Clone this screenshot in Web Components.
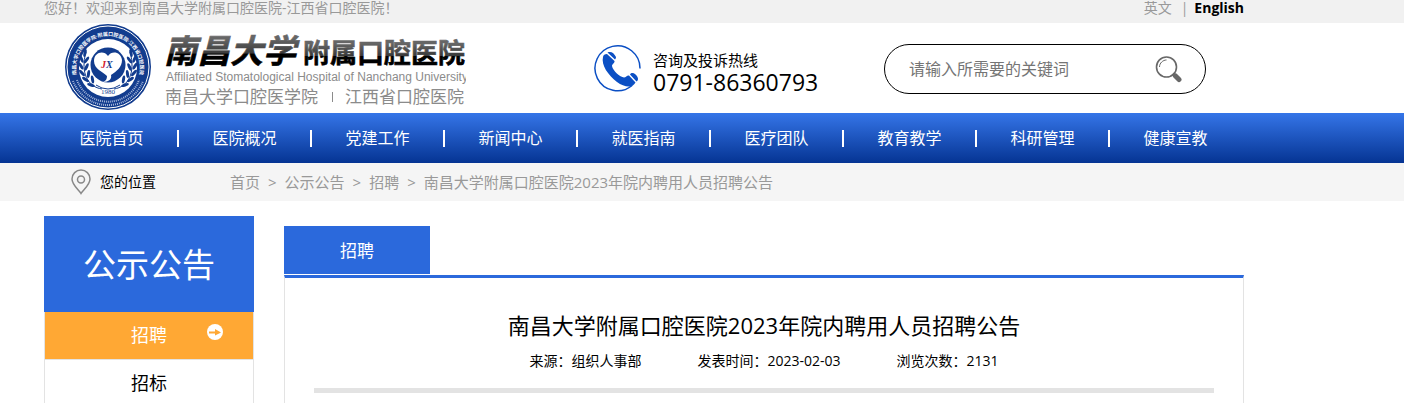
<!DOCTYPE html>
<html lang="zh-CN">
<head>
  <meta charset="utf-8">
  <meta name="viewport" content="width=device-width, initial-scale=1.0">
  <title>南昌大学附属口腔医院</title>
  <style>
    * { box-sizing: border-box; }
    body {
      margin: 0;
      background: #fff;
      color: #000;
      font: 14px/20px "Open Sans", "Noto Sans CJK SC", sans-serif;
      --blue: #2b69dc;
      --line: #e3e3e3;
    }
    .columns {
      display: flex;
      align-items: flex-start;
      gap: 30px;
      padding-top: 15px;
    }
    article-panel { flex: 1; margin-top: 10px; }
  </style>
</head>
<body>
  <template id="page-wrap">
    <style>
      :host { display: block; box-sizing: border-box; max-width: 1244px; padding-left: 44px; }
    </style>
    <slot></slot>
  </template>

  <template id="top-bar">
    <style>
      :host { display: block; background: #f1f1f1; color: #999; }
      .row { display: flex; justify-content: space-between; line-height: 16px; padding-bottom: 7px; }
      nav { display: flex; gap: 6px; }
      a { color: inherit; text-decoration: none; }
      a.cn { margin-right: 3px; }
      a.en { color: #000; font-weight: bold; }
    </style>
    <page-wrap>
      <div class="row">
        <slot></slot>
        <nav><a class="cn" href="#">英文</a><span>|</span><a class="en" href="#">English</a></nav>
      </div>
    </page-wrap>
  </template>

  <template id="hospital-logo">
    <style>
      :host { display: block; }
      a { display: block; }
      svg { display: block; }
      text { font-family: "Liberation Sans", "Noto Sans CJK SC", sans-serif; }
      .serif { font-family: "Liberation Serif", serif; }
    </style>
    <a href="#" aria-label="南昌大学附属口腔医院">
      <svg width="402" height="90" viewBox="0 0 402 90">
        <defs>
          <linearGradient id="ink" x1="0" y1="0" x2="0" y2="1">
            <stop offset="0.15" stop-color="#666"></stop>
            <stop offset="0.55" stop-color="#3a3a3a"></stop>
            <stop offset="0.56" stop-color="#000"></stop>
          </linearGradient>
          <path id="arcTop" d="M16.300 61A32 32 0 1 1 71.700 61"></path>
          <g id="laurel" fill="none" stroke="#123c8e" stroke-width="1">
            <path d="M38 66C24 64 16 50 22 29"></path>
            <g fill="#123c8e" stroke="none">
              <ellipse cx="21" cy="30" rx="1.500" ry="4" transform="rotate(12 21 30)"></ellipse>
              <ellipse cx="17.500" cy="36" rx="1.500" ry="4" transform="rotate(-22 17.5 36)"></ellipse>
              <ellipse cx="22.500" cy="37" rx="1.500" ry="4" transform="rotate(35 22.5 37)"></ellipse>
              <ellipse cx="17" cy="43" rx="1.500" ry="4" transform="rotate(-30 17 43)"></ellipse>
              <ellipse cx="22.500" cy="44" rx="1.500" ry="4" transform="rotate(25 22.5 44)"></ellipse>
              <ellipse cx="18" cy="50" rx="1.500" ry="4" transform="rotate(-42 18 50)"></ellipse>
              <ellipse cx="24.500" cy="51" rx="1.500" ry="4" transform="rotate(8 24.5 51)"></ellipse>
              <ellipse cx="21.500" cy="56.500" rx="1.500" ry="4" transform="rotate(-55 21.5 56.5)"></ellipse>
              <ellipse cx="28.500" cy="56.500" rx="1.500" ry="4" transform="rotate(-10 28.5 56.5)"></ellipse>
              <ellipse cx="27" cy="62" rx="1.500" ry="4" transform="rotate(-70 27 62)"></ellipse>
            </g>
          </g>
        </defs>
        <circle cx="44" cy="44" r="43" fill="#123c8e"></circle>
        <circle cx="44" cy="44" r="41" fill="none" stroke="#fff" stroke-width="1"></circle>
        <circle cx="44" cy="45" r="29" fill="#fff"></circle>
        <text font-size="5" font-weight="bold" fill="#fff"><textPath href="#arcTop" startOffset="50%" text-anchor="middle">南昌大学口腔医学院·附属口腔医院·江西省口腔医院</textPath></text>
        <path d="M9 58A37.500 37.500 0 0 0 79 58M13 57A33 33 0 0 0 75 57" fill="none" stroke="#a9b9dc" stroke-width="2" stroke-dasharray="1 1"></path>
        <use href="#laurel"></use>
        <use href="#laurel" transform="translate(88 0) scale(-1 1)"></use>
        <circle cx="44" cy="42" r="17.500" fill="#123c8e"></circle>
        <path d="M44 33C40 27 30 29 30 38C30 46 39 49 43 53C43 56 42 58 39 59C45 59 48 56 47 52C53 48 58 44 58 37C57 29 48 27 44 33Z" fill="#fff"></path>
        <text class="serif" x="37" y="45" font-size="10" font-weight="bold" font-style="italic"><tspan fill="#d3202c">J</tspan><tspan fill="#123c8e">X</tspan></text>
        <path d="M32 62Q44 70 56 62" fill="none" stroke="#123c8e"></path>
        <text class="serif" x="44" y="71" text-anchor="middle" font-size="7" fill="#123c8e">1980</text>
        <g fill="url(#ink)" stroke="url(#ink)" stroke-width="0.600" font-weight="bold">
          <text x="100" y="40" font-size="33" font-style="italic">南昌大学</text>
          <text x="239" y="40" font-size="27">附属口腔医院</text>
        </g>
        <g fill="#8b8b8b">
          <text x="102" y="58" font-size="12">Affiliated Stomatological Hospital of Nanchang University</text>
          <text x="101" y="80" font-size="17">南昌大学口腔医学院</text>
          <text x="281" y="80" font-size="17">江西省口腔医院</text>
          <path d="M268 69H269V79H268Z"></path>
        </g>
      </svg>
    </a>
  </template>

  <template id="hot-line">
    <style>
      :host { display: flex; align-items: center; gap: 12px; }
      svg { display: block; }
      .text { padding-top: 8px; }
      .label { font-size: 15px; line-height: 20px; }
      .number { font-size: 23px; line-height: 24px; }
    </style>
    <svg width="47" height="48" viewBox="0 0 47 48" aria-hidden="true">
      <path d="M46 24.500A22.500 22.500 0 1 0 38 41.500" fill="none" stroke="#0b4fc4" stroke-width="1.500"></path>
      <path d="M9 13C9 11 11 10 13 10L20.500 17C21 19 18 20 18 22C19 27 26 33 30 33.500C32 33.500 33 31 35 31.500L41.500 38.500C38 45 30 43 23 38C14 31 7 21 9 13Z" fill="#0b4fc4"></path>
      <path d="M13.500 8.500C17 7 20 9 22 13C22 14 21.500 15 21 15.500ZM36 30.500C38 27 42 30 43.500 33C44.500 35 44 37 42.500 37.500Z" fill="#0b4fc4"></path>
    </svg>
    <div class="text">
      <div class="label"><slot name="label"></slot></div>
      <div class="number"><slot name="number"></slot></div>
    </div>
  </template>

  <template id="search-box">
    <style>
      :host { display: block; }
      form {
        display: flex;
        align-items: center;
        height: 50px;
        padding: 0 22px 0 24px;
        border: 1px solid #000;
        border-radius: 25px;
        box-sizing: border-box;
      }
      input {
        flex: 1;
        min-width: 0;
        padding: 0;
        border: 0;
        outline: 0;
        background: none;
        font: inherit;
        font-size: 16px;
      }
      input::placeholder { color: #757575; opacity: 1; }
      button { padding: 0; border: 0; background: none; cursor: pointer; }
      svg { display: block; }
    </style>
    <form>
      <input type="text" aria-label="关键词" placeholder="请输入所需要的关键词">
      <button type="button" aria-label="搜索">
        <svg width="28" height="28" viewBox="0 0 28 28">
          <circle cx="11.500" cy="12" r="10" fill="none" stroke="#686868" stroke-width="1.600"></circle>
          <path d="M4.500 12C4.500 8 8 5 11.500 5" fill="none" stroke="#686868"></path>
          <path d="M18 18.500L20 20.500" stroke="#686868" stroke-width="3"></path>
          <path d="M20.500 21L24 24.500" stroke="#686868" stroke-width="5" stroke-linecap="round"></path>
        </svg>
      </button>
    </form>
  </template>

  <template id="site-header">
    <style>
      :host { display: block; }
      .row { display: flex; align-items: center; height: 90px; }
      hospital-logo { margin-left: 20px; }
      hot-line { margin-left: 128px; }
      search-box { width: 322px; margin: 2px 38px 0 auto; }
    </style>
    <page-wrap>
      <div class="row">
        <hospital-logo></hospital-logo>
        <hot-line>
          <span slot="label">咨询及投诉热线</span>
          <span slot="number">0791-86360793</span>
        </hot-line>
        <search-box></search-box>
      </div>
    </page-wrap>
  </template>

  <template id="main-nav">
    <style>
      :host { display: block; background: linear-gradient(#3575e8, #053493); color: #fff; }
      nav { display: flex; padding: 0 1px 0 2px; }
    </style>
    <page-wrap><nav><slot></slot></nav></page-wrap>
  </template>

  <template id="nav-item">
    <style>
      :host { display: flex; flex: 1; align-items: center; }
      a { flex: 1; color: inherit; font-size: 16px; line-height: 50px; text-align: center; text-decoration: none; }
      i { width: 2px; height: 17px; background: #fff; }
      :host(:last-child) i { visibility: hidden; }
    </style>
    <a href="#"><slot></slot></a><i></i>
  </template>

  <template id="crumb-bar">
    <style>
      :host { display: block; background: #f5f5f5; }
      .row { display: flex; align-items: center; height: 38px; padding-left: 27px; }
      .here { margin: 0 74px 0 9px; }
      nav { display: flex; gap: 8px; color: #999; font-size: 15px; }
      svg { display: block; }
      ::slotted(a) { color: inherit; text-decoration: none; }
    </style>
    <page-wrap>
      <div class="row">
        <svg width="20" height="26" viewBox="0 0 20 26" fill="none" stroke="#888" stroke-width="1.500" aria-hidden="true">
          <path d="M10 24.500C8 21 1 16 1 10A9 9 0 0 1 19 10C19 16 12 21 10 24.500Z"></path>
          <circle cx="10" cy="10.500" r="3.500"></circle>
        </svg>
        <span class="here">您的位置</span>
        <nav><slot></slot></nav>
      </div>
    </page-wrap>
  </template>

  <template id="side-menu">
    <style>
      :host { display: block; width: 210px; }
      h2 {
        margin: 0;
        padding-top: 2px;
        background: var(--blue);
        color: #fff;
        font-size: 33px;
        font-weight: normal;
        line-height: 94px;
        text-align: center;
      }
      nav { border: solid var(--line); border-width: 0 1px; }
    </style>
    <h2><slot name="title"></slot></h2>
    <nav><slot></slot></nav>
  </template>

  <template id="side-item">
    <style>
      :host { display: block; border-bottom: 1px solid var(--line); }
      a {
        display: grid;
        grid-template-columns: 1fr auto 1fr;
        color: #000;
        font-size: 18px;
        line-height: 47px;
        text-decoration: none;
      }
      a span { grid-column: 2; }
      svg { display: none; justify-self: end; margin: 11px 29px 0 0; }
      :host([active]) a { background: #ffa834; color: #fff; }
      :host([active]) svg { display: block; }
    </style>
    <a href="#">
      <span><slot></slot></span>
      <svg width="18" height="18" viewBox="0 0 18 18" aria-hidden="true">
        <circle cx="9" cy="9" r="8" fill="#fff"></circle>
        <path d="M3 8.500H9V6L15 9.500L9 12.500V10.500H3Z" fill="#ffa834"></path>
      </svg>
    </a>
  </template>

  <template id="article-panel">
    <style>
      :host { display: block; min-width: 0; }
      .tab {
        width: 146px;
        margin-bottom: 1px;
        padding-top: 2px;
        box-sizing: border-box;
        background: var(--blue);
        color: #fff;
        font-size: 17px;
        line-height: 46px;
        text-align: center;
      }
      article {
        border: 1px solid var(--line);
        border-top: 3px solid var(--blue);
        padding: 31px 29px 20px;
      }
      h1 { margin: 0; font-size: 22px; font-weight: normal; line-height: 32px; text-align: center; }
      .meta { display: flex; justify-content: center; gap: 56px; margin-top: 10px; }
      hr { height: 5px; margin: 17px 0 0; border: 0; background: #e3e3e3; }
    </style>
    <div class="tab"><slot name="tab"></slot></div>
    <article>
      <h1><slot name="title"></slot></h1>
      <div class="meta"><slot></slot></div>
      <hr>
    </article>
  </template>

  <script>
    // every element here is just its template in a shadow root
    function define(name) {
      customElements.define(name,
        class extends HTMLElement {
          constructor() {
            super();
            const template = document.getElementById(name);
            this.attachShadow({ mode: 'open' }).appendChild(
              template.content.cloneNode(true)
            );
          }
        }
      );
    }
    [
      'page-wrap', 'top-bar', 'hospital-logo', 'hot-line', 'search-box', 'site-header',
      'main-nav', 'nav-item', 'crumb-bar', 'side-menu', 'side-item', 'article-panel'
    ].forEach(define);
  </script>

  <top-bar>您好！欢迎来到南昌大学附属口腔医院-江西省口腔医院！</top-bar>
  <site-header></site-header>
  <main-nav>
    <nav-item>医院首页</nav-item>
    <nav-item>医院概况</nav-item>
    <nav-item>党建工作</nav-item>
    <nav-item>新闻中心</nav-item>
    <nav-item>就医指南</nav-item>
    <nav-item>医疗团队</nav-item>
    <nav-item>教育教学</nav-item>
    <nav-item>科研管理</nav-item>
    <nav-item>健康宣教</nav-item>
  </main-nav>
  <crumb-bar>
    <a href="#">首页</a><span>&gt;</span>
    <a href="#">公示公告</a><span>&gt;</span>
    <a href="#">招聘</a><span>&gt;</span>
    <span>南昌大学附属口腔医院2023年院内聘用人员招聘公告</span>
  </crumb-bar>
  <page-wrap>
    <div class="columns">
      <side-menu>
        <span slot="title">公示公告</span>
        <side-item active>招聘</side-item>
        <side-item>招标</side-item>
      </side-menu>
      <article-panel>
        <span slot="tab">招聘</span>
        <span slot="title">南昌大学附属口腔医院2023年院内聘用人员招聘公告</span>
        <span>来源：组织人事部</span>
        <span>发表时间：2023-02-03</span>
        <span>浏览次数：2131</span>
      </article-panel>
    </div>
  </page-wrap>
</body>
</html>
